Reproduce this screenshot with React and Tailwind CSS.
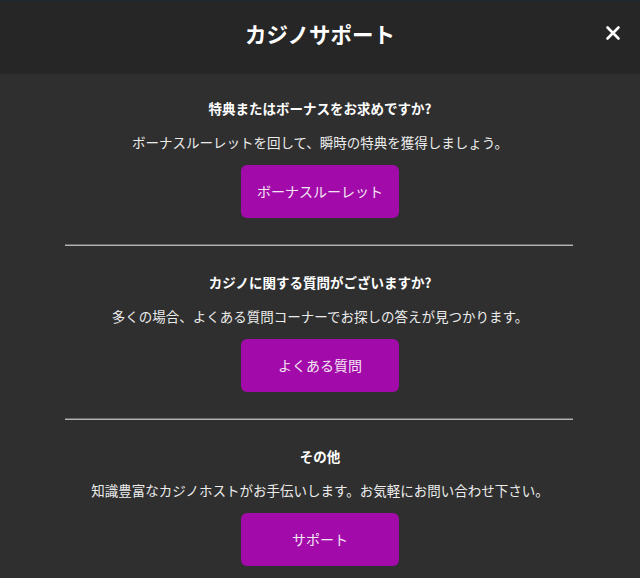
import React from "react";

const sections = [
  {
    title: "特典またはボーナスをお求めですか?",
    text: "ボーナスルーレットを回して、瞬時の特典を獲得しましょう。",
    button: "ボーナスルーレット",
  },
  {
    title: "カジノに関する質問がございますか?",
    text: "多くの場合、よくある質問コーナーでお探しの答えが見つかります。",
    button: "よくある質問",
  },
  {
    title: "その他",
    text: "知識豊富なカジノホストがお手伝いします。お気軽にお問い合わせ下さい。",
    button: "サポート",
  },
];

const Section = ({ item }) => {
  return (
    <div className="flex flex-col items-center">
      <h3 className="text-[13.5px] leading-[20px] font-bold text-white">{item.title}</h3>
      <p className="mt-[14px] text-[13.5px] leading-[20px] text-[#ececec]">{item.text}</p>
      <button className="mt-[13px] w-[158px] h-[53px] rounded-[6px] bg-[#a20ba9] text-[14px] text-[#f3e6f3]">
        {item.button}
      </button>
    </div>
  );
};

export default function App() {
  return (
    <div
      className="w-[640px] h-[578px] bg-[#2f2f2f] overflow-hidden"
      style={{ fontFamily: '"Noto Sans CJK JP", "Noto Sans", sans-serif' }}
    >
      <header className="relative h-[74px] bg-[#262626] border-t border-[#1c2a30] flex items-center justify-center">
        <h2 className="text-[21.5px] font-bold text-white -mt-[7px]">カジノサポート</h2>
        <button className="absolute right-[19px] top-[24px] w-[16px] h-[16px] text-white">
          <svg viewBox="0 0 16 16" className="w-[16px] h-[16px]" fill="none" stroke="currentColor" strokeWidth="2.6" strokeLinecap="round">
            <path d="M2.5 2.5l11 11M13.5 2.5l-11 11" />
          </svg>
        </button>
      </header>

      <div className="pt-[24px]">
        {sections.map((s, i) => (
          <div key={i}>
            {i > 0 && (
              <div className="mx-[65px] w-[508px] mt-[26px] mb-[26px] h-[2px] border-t border-[#6a6a6a] border-b border-b-[#b4b4b4]"></div>
            )}
            <Section item={s} />
          </div>
        ))}
      </div>
    </div>
  );
}
